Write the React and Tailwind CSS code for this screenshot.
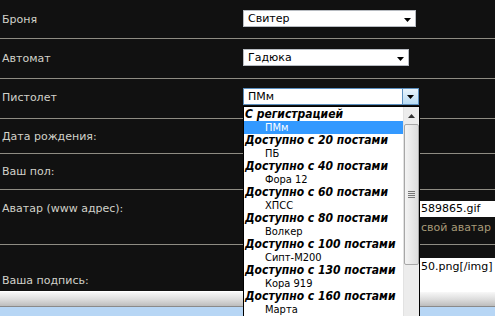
import React from "react";

const labelFont = { fontFamily: '"DejaVu Sans", Verdana, sans-serif' };
const ctlFont = { fontFamily: '"DejaVu Sans Condensed", "DejaVu Sans", Tahoma, sans-serif' };

function Arrow() {
  return (
    <svg width="7" height="4" viewBox="0 0 7 4" className="block">
      <path d="M0 0H7L3.5 4Z" fill="#000" />
    </svg>
  );
}

function Select({ text, width, focused }) {
  return (
    <div
      className={`h-[17px] flex items-center bg-white border ${focused ? "border-[#5b8fbf]" : "border-[#b8bcc2]"}`}
      style={{ width }}
    >
      <span className="flex-1 pl-[4px] text-[11px] text-black leading-none" style={labelFont}>
        {text}
      </span>
      {focused ? (
        <div className="w-[16px] h-full flex items-center justify-center bg-gradient-to-b from-[#e9f4fc] to-[#b9dcf4] border-l border-[#5b8fbf]">
          <Arrow />
        </div>
      ) : (
        <div className="w-[16px] flex items-center justify-center pt-[2px]">
          <Arrow />
        </div>
      )}
    </div>
  );
}

function Row({ label, h, children, labelTop }) {
  return (
    <div className="flex border-b border-[#8e8c83]" style={{ height: h }}>
      <div className="w-[243px] shrink-0 pl-[2px] text-[11px] text-[#d2d2ca]" style={{ ...labelFont, paddingTop: labelTop }}>
        {label}
      </div>
      <div className="flex-1 min-w-0">{children}</div>
    </div>
  );
}

const items = [
  ["h", "С регистрацией"],
  ["i", "ПМм", true],
  ["h", "Доступно с 20 постами"],
  ["i", "ПБ"],
  ["h", "Доступно с 40 постами"],
  ["i", "Фора 12"],
  ["h", "Доступно с 60 постами"],
  ["i", "ХПСС"],
  ["h", "Доступно с 80 постами"],
  ["i", "Волкер"],
  ["h", "Доступно с 100 постами"],
  ["i", "Сипт-М200"],
  ["h", "Доступно с 130 постами"],
  ["i", "Кора 919"],
  ["h", "Доступно с 160 постами"],
  ["i", "Марта"],
];

function Dropdown() {
  return (
    <div className="absolute left-[243px] top-[106px] w-[177px] h-[220px] bg-white border border-black flex overflow-hidden">
      <div className="flex-1 pt-[1px] overflow-hidden">
        {items.map(([t, s, sel], i) =>
          t === "h" ? (
            <div key={i} className="h-[13px] pl-[1px] text-[12px] leading-[13px] font-bold italic text-black whitespace-nowrap" style={ctlFont}>
              {s}
            </div>
          ) : (
            <div
              key={i}
              className={`h-[13px] pl-[21px] text-[11px] leading-[13px] whitespace-nowrap ${sel ? "bg-[#3399ff] text-white" : "text-black"}`}
              style={ctlFont}
            >
              {s}
            </div>
          )
        )}
      </div>
      <div className="w-[16px] shrink-0 bg-[#ececec] border-l border-[#e2e2e2] flex flex-col items-center">
        <div className="h-[17px] w-full flex items-center justify-center">
          <svg width="7" height="4" viewBox="0 0 7 4"><path d="M0 4H7L3.5 0Z" fill="#333" /></svg>
        </div>
        <div className="w-[15px] h-[141px] rounded-[2px] border border-[#a7a7a7] bg-gradient-to-r from-[#f4f4f4] to-[#dcdcdc] flex flex-col items-center justify-center gap-[1px]">
          <div className="w-[7px] h-[1px] bg-[#777]" />
          <div className="w-[7px] h-[1px] bg-[#777]" />
          <div className="w-[7px] h-[1px] bg-[#777]" />
          <div className="w-[7px] h-[1px] bg-[#777]" />
        </div>
      </div>
    </div>
  );
}

export default function App() {
  return (
    <div className="relative w-[495px] h-[316px] bg-[#111111] overflow-hidden">
      <Row label="Броня" h={39} labelTop={12}>
        <div className="pt-[10px]"><Select text="Свитер" width={173} /></div>
      </Row>
      <Row label="Автомат" h={40} labelTop={12}>
        <div className="pt-[10px]"><Select text="Гадюка" width={166} /></div>
      </Row>
      <Row label="Пистолет" h={40} labelTop={11}>
        <div className="pt-[9px]"><Select text="ПМм" width={176} focused /></div>
      </Row>
      <Row label="Дата рождения:" h={35} labelTop={10} />
      <Row label="Ваш пол:" h={36} labelTop={10} />
      <Row label="Аватар (www адрес):" h={55} labelTop={11}>
        <div className="pt-[11px]">
          <div className="h-[16px] bg-white flex items-center pl-[178px] text-[11px] text-black whitespace-nowrap" style={labelFont}>
            589865.gif
          </div>
          <div className="pl-[178px] pt-[3px] text-[11px] text-[#a89a78] whitespace-nowrap" style={labelFont}>
            свой аватар
          </div>
        </div>
      </Row>
      <div className="flex h-[46px]">
        <div className="w-[243px] shrink-0 pl-[2px] pt-[28px] text-[11px] text-[#d2d2ca]" style={labelFont}>
          Ваша подпись:
        </div>
        <div className="flex-1 pt-[13px]">
          <div className="h-[33px] bg-white pl-[178px] pt-[1px] text-[11px] text-black whitespace-nowrap" style={labelFont}>
            50.png[/img]
          </div>
        </div>
      </div>
      <div className="h-[16px] bg-gradient-to-b from-[#f8f8f8] via-[#dedede] to-[#bdbdbd] border-t border-[#ffffff] border-b border-b-[#8a8a8a]" />
      <div className="h-[10px] bg-[#b7d6f5]" />
      <Dropdown />
    </div>
  );
}
